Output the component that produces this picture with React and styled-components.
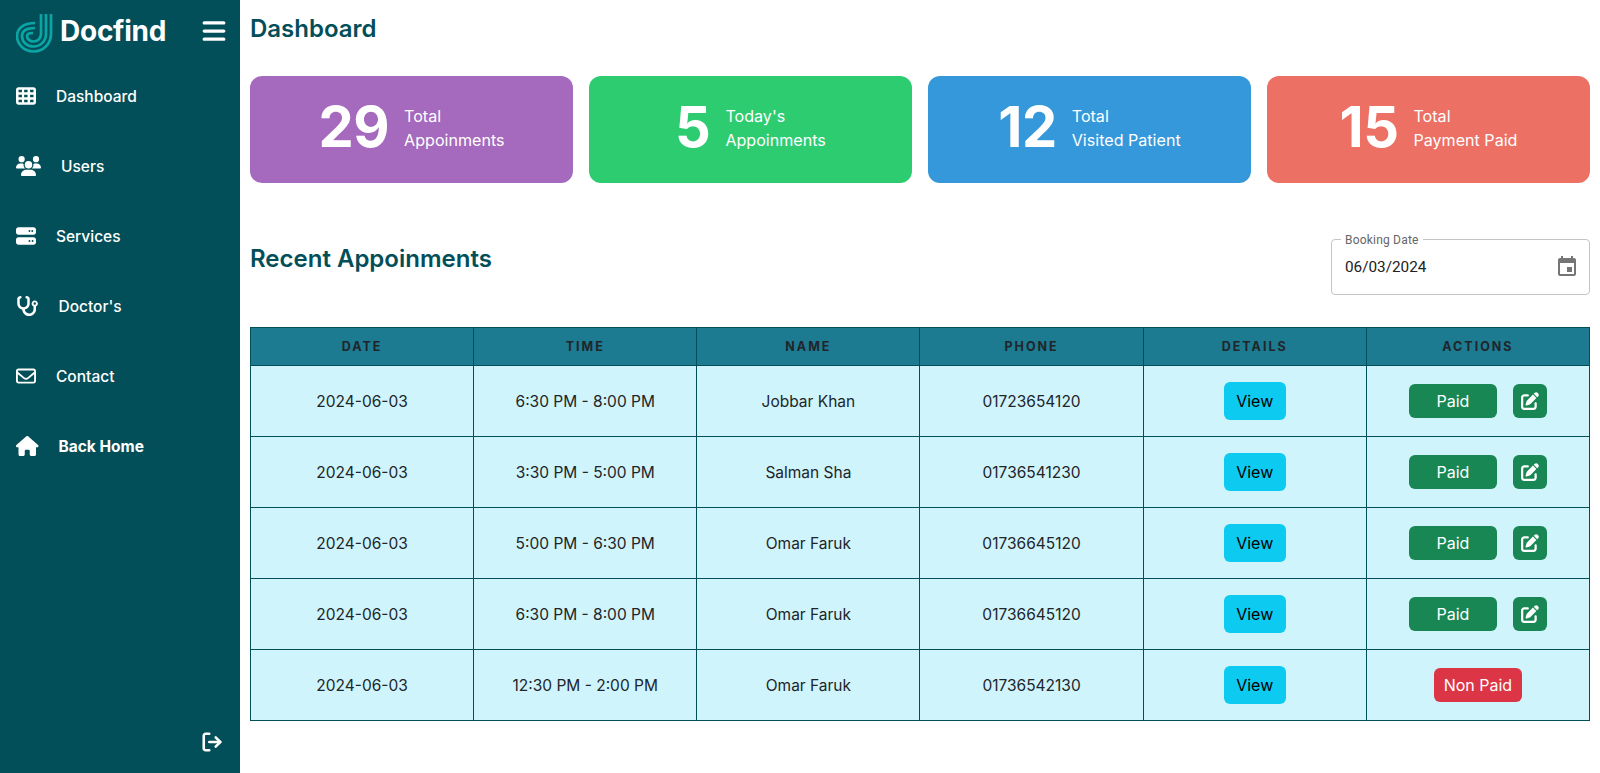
import React from "react";
import styled, { createGlobalStyle } from "styled-components";
import {
  FaTableCells, FaUsers, FaServer, FaStethoscope, FaRegEnvelope, FaHouse,
  FaPenToSquare, FaBars,
} from "react-icons/fa6";
import { FiLogOut } from "react-icons/fi";
import { MdEvent } from "react-icons/md";

const Global = createGlobalStyle`
  html, body { margin: 0; padding: 0; background: #fff; }
  body { font-family: Inter, "Noto Sans", sans-serif; color: #212529; }
  * { box-sizing: border-box; }
`;

const Shell = styled.div`display: flex; width: 1600px; height: 773px; overflow: hidden;`;
const Sidebar = styled.aside`
  width: 240px; flex: none; background: #034f59; color: #fff;
  display: flex; flex-direction: column; padding: 14px 16px 20px;
`;
const Brand = styled.div`display: flex; align-items: center; height: 38px; margin-bottom: 32px;`;
const LogoMark = styled.svg`width: 37px; height: 39px; flex: none;`;
const BrandName = styled.span`font-size: 28px; font-weight: 700; letter-spacing: -0.25px; margin: -4px 0 0 7px;`;
const Burger = styled(FaBars)`width: 24px; height: 26px; margin: -5px -2px 0 auto;`;
const Nav = styled.nav`display: flex; flex-direction: column; gap: 46px;`;
const NavItem = styled.a`
  display: flex; align-items: center; gap: 20px; height: 24px; font-size: 15.5px;
  font-weight: ${p => (p.$bold ? 700 : 500)};
`;
const NavIcon = styled.span`
  display: flex; flex: none; width: ${p => p.$w}px;
  svg { width: 100%; height: 20px; }
`;
const Logout = styled.div`
  margin-top: auto; align-self: flex-end; display: flex; margin-right: 1px;
  svg { width: 22px; height: 22px; stroke-width: 2.8; }
`;

const Main = styled.main`flex: 1; padding: 14px 10px 0; min-width: 0;`;
const PageTitle = styled.h1`margin: 0 0 32px; font-size: 24px; line-height: 30px; font-weight: 600; color: #034f59;`;
const Cards = styled.div`display: grid; grid-template-columns: repeat(4, 1fr); gap: 16px;`;
const Card = styled.div`
  height: 107px; border-radius: 12px; background: ${p => p.$bg}; color: #fff;
  display: flex; align-items: center; justify-content: center; gap: 15px;
`;
const CardNum = styled.span`font-size: 56px; font-weight: 700; line-height: 1; letter-spacing: -0.5px; margin-bottom: 5px;`;
const CardText = styled.div`font-size: 16.1px; line-height: 24px; margin-bottom: 4px;`;

const SectionHead = styled.div`
  display: flex; justify-content: space-between; align-items: flex-start; margin-top: 49px; margin-bottom: 32px;
`;
const SectionTitle = styled.h2`margin: 12px 0 0; font-size: 24px; line-height: 30px; font-weight: 600; color: #034f59;`;

const DateField = styled.fieldset`
  margin: 7px 0 0; width: 259px; height: 56px; padding: 0 10px 0 13px; border: 1px solid #c4c4c4; border-radius: 4px;
  display: flex; align-items: center; justify-content: space-between;
  font-family: Roboto, sans-serif; min-inline-size: 0;
`;
const DateLegend = styled.legend`font-size: 12px; line-height: 0; padding: 0 4px; margin-left: -4px; letter-spacing: 0.2px; color: #666;`;
const DateValue = styled.span`font-size: 15.3px; color: #212121;`;
const CalIcon = styled(MdEvent)`width: 24px; height: 24px; color: #757575;`;

const Table = styled.table`
  width: 1340px; border-collapse: collapse; table-layout: fixed; text-align: center;
`;
const Th = styled.th`
  height: 38px; padding: 0; background: #1c7a91; border: 1px solid #034f59; color: #212529;
  font-size: 12.5px; font-weight: 700; letter-spacing: 2px; text-transform: uppercase;
`;
const Td = styled.td`
  height: 71px; padding: 0; background: #cff4fc; border: 1px solid #034f59; color: #212529; font-size: 15.5px;
`;
const Button = styled.button`
  font-family: Inter, sans-serif; font-size: 16px; border: none; border-radius: 6px; padding: 0;
  display: inline-flex; align-items: center; justify-content: center; vertical-align: middle;
`;
const ViewButton = styled(Button)`width: 62px; height: 38px; background: #0dcaf0; color: #000;`;
const StatusButton = styled(Button)`width: 88px; height: 34px; color: #fff; background: ${p => (p.$paid ? "#198754" : "#dc3545")};`;
const EditButton = styled(Button)`width: 34px; height: 34px; color: #fff; background: #198754; margin-left: 16px; svg { width: 18px; height: 18px; }`;

const stats = [
  { n: 29, a: "Total", b: "Appoinments", bg: "#a569bd" },
  { n: 5, a: "Today's", b: "Appoinments", bg: "#2ecc71" },
  { n: 12, a: "Total", b: "Visited Patient", bg: "#3498db" },
  { n: 15, a: "Total", b: "Payment Paid", bg: "#ec7063" },
];
const rows = [
  ["6:30 PM - 8:00 PM", "Jobbar Khan", "01723654120", true],
  ["3:30 PM - 5:00 PM", "Salman Sha", "01736541230", true],
  ["5:00 PM - 6:30 PM", "Omar Faruk", "01736645120", true],
  ["6:30 PM - 8:00 PM", "Omar Faruk", "01736645120", true],
  ["12:30 PM - 2:00 PM", "Omar Faruk", "01736542130", false],
];
const nav = [
  { Icon: FaTableCells, w: 20, label: "Dashboard" },
  { Icon: FaUsers, w: 25, label: "Users" },
  { Icon: FaServer, w: 20, label: "Services" },
  { Icon: FaStethoscope, w: 22.5, label: "Doctor's" },
  { Icon: FaRegEnvelope, w: 20, label: "Contact" },
  { Icon: FaHouse, w: 22.5, label: "Back Home", bold: true },
];

const Logo = () => (
  <LogoMark viewBox="16 14 37 39" fill="none" stroke="#0aa6a6" strokeWidth="2.7" strokeLinecap="butt">
    <path d="M51 14V34C51 44 43 51.5 33.5 51.5C24 51.5 17 44 17 36C17 29 23 23 35 23" />
    <path d="M46 14V34C46 41 40.5 46.5 33.5 46.5C27 46.5 22 42 22 36C22 31.5 26 28 35 28" />
    <path d="M41 14V34C41 38.5 37.5 41.5 33.5 41.5C30 41.5 27 39 27 36C27 34 29 33 33 33" />
  </LogoMark>
);

export default function App() {
  return (
    <Shell>
      <Global />
      <Sidebar>
        <Brand><Logo /><BrandName>Docfind</BrandName><Burger /></Brand>
        <Nav>
          {nav.map(({ Icon, w, label, bold }) => (
            <NavItem key={label} $bold={bold}><NavIcon $w={w}><Icon /></NavIcon>{label}</NavItem>
          ))}
        </Nav>
        <Logout><FiLogOut /></Logout>
      </Sidebar>
      <Main>
        <PageTitle>Dashboard</PageTitle>
        <Cards>
          {stats.map(s => (
            <Card key={s.bg} $bg={s.bg}>
              <CardNum>{s.n}</CardNum>
              <CardText>{s.a}<br />{s.b}</CardText>
            </Card>
          ))}
        </Cards>
        <SectionHead>
          <SectionTitle>Recent Appoinments</SectionTitle>
          <DateField>
            <DateLegend>Booking Date</DateLegend>
            <DateValue>06/03/2024</DateValue>
            <CalIcon />
          </DateField>
        </SectionHead>
        <Table>
          <thead>
            <tr>{["Date", "Time", "Name", "Phone", "Details", "Actions"].map(h => <Th key={h}>{h}</Th>)}</tr>
          </thead>
          <tbody>
            {rows.map((r, i) => (
              <tr key={i}>
                <Td>2024-06-03</Td>
                <Td>{r[0]}</Td>
                <Td>{r[1]}</Td>
                <Td>{r[2]}</Td>
                <Td><ViewButton>View</ViewButton></Td>
                <Td>
                  <StatusButton $paid={r[3]}>{r[3] ? "Paid" : "Non Paid"}</StatusButton>
                  {r[3] && <EditButton><FaPenToSquare /></EditButton>}
                </Td>
              </tr>
            ))}
          </tbody>
        </Table>
      </Main>
    </Shell>
  );
}
